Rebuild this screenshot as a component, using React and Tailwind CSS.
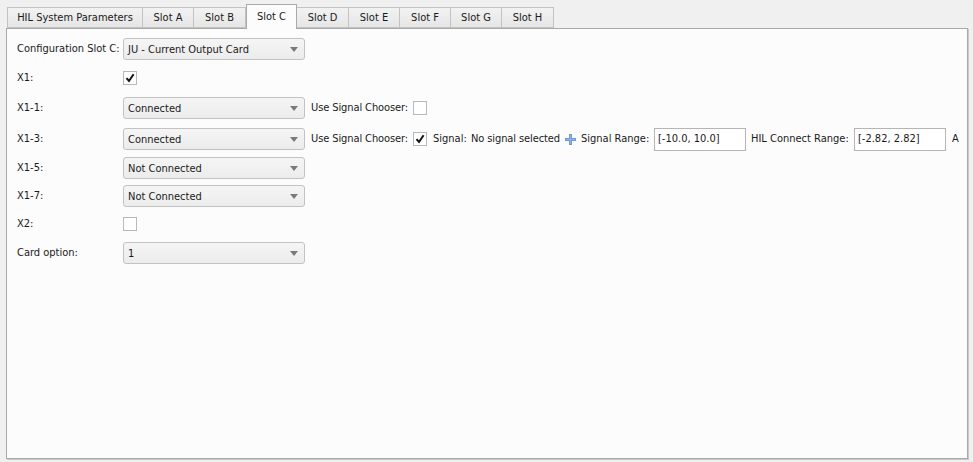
import React from 'react';

const tabs = [
  { label: 'HIL System Parameters', w: 'w-[136px]' },
  { label: 'Slot A', w: 'w-[51px]' },
  { label: 'Slot B', w: 'w-[52px]' },
  { label: 'Slot C', w: 'w-[51px]' },
  { label: 'Slot D', w: 'w-[52px]' },
  { label: 'Slot E', w: 'w-[51px]' },
  { label: 'Slot F', w: 'w-[51px]' },
  { label: 'Slot G', w: 'w-[51px]' },
  { label: 'Slot H', w: 'w-[52px]' },
];

function Combo({ value }) {
  return (
    <div className="w-[182px] h-[22px] shrink-0 flex items-center justify-between pl-[4px] pr-[6px] border border-[#c2c2c2] rounded-[3px] bg-gradient-to-b from-[#f5f5f5] to-[#ececec] text-[#1a1a1a]">
      <span className="pt-[2px]">{value}</span>
      <svg width="8" height="5" viewBox="0 0 8 5" className="shrink-0"><path d="M0 0h8L4 5z" fill="#7a7a7a" /></svg>
    </div>
  );
}

function Check({ checked }) {
  return (
    <div className="w-[14px] h-[14px] shrink-0 border border-[#b9b9b9] bg-white flex items-center justify-center">
      {checked && (
        <svg width="10" height="10" viewBox="0 0 10 10">
          <path d="M1.5 5.2 L4 8 L8.6 1.2" fill="none" stroke="#111" strokeWidth="2" />
        </svg>
      )}
    </div>
  );
}

function Field({ value }) {
  return (
    <div className="w-[92px] h-[23px] shrink-0 flex items-center px-[3px] pt-[1px] border border-[#b5b5b5] bg-white text-[#1a1a1a]">
      {value}
    </div>
  );
}

function Row({ label, children, className = '' }) {
  return (
    <div className={`flex items-center h-[22px] whitespace-nowrap ${className}`}>
      <div className="w-[106px] shrink-0 pt-[1px]">{label}</div>
      {children}
    </div>
  );
}

export default function App() {
  return (
    <div className="w-[973px] h-[462px] bg-[#f0f0f0] text-[11px] text-[#1a1a1a] relative whitespace-nowrap" style={{ fontFamily: '"DejaVu Sans Condensed", "Liberation Sans", Arial, sans-serif' }}>
      <div className="flex pl-[7px] pt-[7px] h-[28px] items-end">
        {tabs.map((t, i) =>
          t.label === 'Slot C' ? (
            <div key={i} className={`${t.w} shrink-0 h-[25px] -mb-px relative z-10 bg-[#fcfcfc] border border-b-0 border-[#aaaaaa] flex items-center justify-center`}>
              {t.label}
            </div>
          ) : (
            <div key={i} className={`${t.w} shrink-0 h-[21px] bg-gradient-to-b from-[#f2f2f2] to-[#e6e6e6] border border-l-0 first:border-l border-[#c3c3c3] flex items-center justify-center pt-[1px]`}>
              {t.label}
            </div>
          )
        )}
      </div>
      <div className="absolute left-[6px] top-[28px] w-[962px] h-[431px] bg-[#fcfcfc] border border-[#a9a9a9] shadow-[1px_1px_0_#c8c8c8] pl-[10px] pt-[9px]">
        <Row label="Configuration Slot C:">
          <Combo value="JU - Current Output Card" />
        </Row>
        <Row label="X1:" className="mt-[7px]">
          <Check checked />
        </Row>
        <Row label="X1-1:" className="mt-[8px]">
          <Combo value="Connected" />
          <span className="ml-[6px] w-[102px] shrink-0 pt-[1px] tracking-[-0.1px]">Use Signal Chooser:</span>
          <Check />
        </Row>
        <Row label="X1-3:" className="mt-[9px]">
          <Combo value="Connected" />
          <span className="ml-[6px] w-[102px] shrink-0 pt-[1px] tracking-[-0.1px]">Use Signal Chooser:</span>
          <Check checked />
          <span className="ml-[6px] w-[38px] shrink-0 pt-[1px]">Signal:</span>
          <span className="w-[94px] shrink-0 pt-[1px] tracking-[-0.1px]">No signal selected</span>
          <svg className="shrink-0" width="11" height="11" viewBox="0 0 11 11">
            <path d="M4 0h3v4h4v3H7v4H4V7H0V4h4z" fill="#6f9ad6" />
            <path d="M5 1h1v4h4v1H6v4H5V6H1V5h4z" fill="#8fb4e6" />
          </svg>
          <span className="ml-[5px] w-[73px] shrink-0 pt-[1px]">Signal Range:</span>
          <Field value="[-10.0, 10.0]" />
          <span className="ml-[5px] w-[103px] shrink-0 pt-[1px]">HIL Connect Range:</span>
          <Field value="[-2.82, 2.82]" />
          <span className="ml-[6px] pt-[1px]">A</span>
        </Row>
        <Row label="X1-5:" className="mt-[7px]">
          <Combo value="Not Connected" />
        </Row>
        <Row label="X1-7:" className="mt-[6px]">
          <Combo value="Not Connected" />
        </Row>
        <Row label="X2:" className="mt-[6px]">
          <Check />
        </Row>
        <Row label="Card option:" className="mt-[7px]">
          <Combo value="1" />
        </Row>
      </div>
    </div>
  );
}
